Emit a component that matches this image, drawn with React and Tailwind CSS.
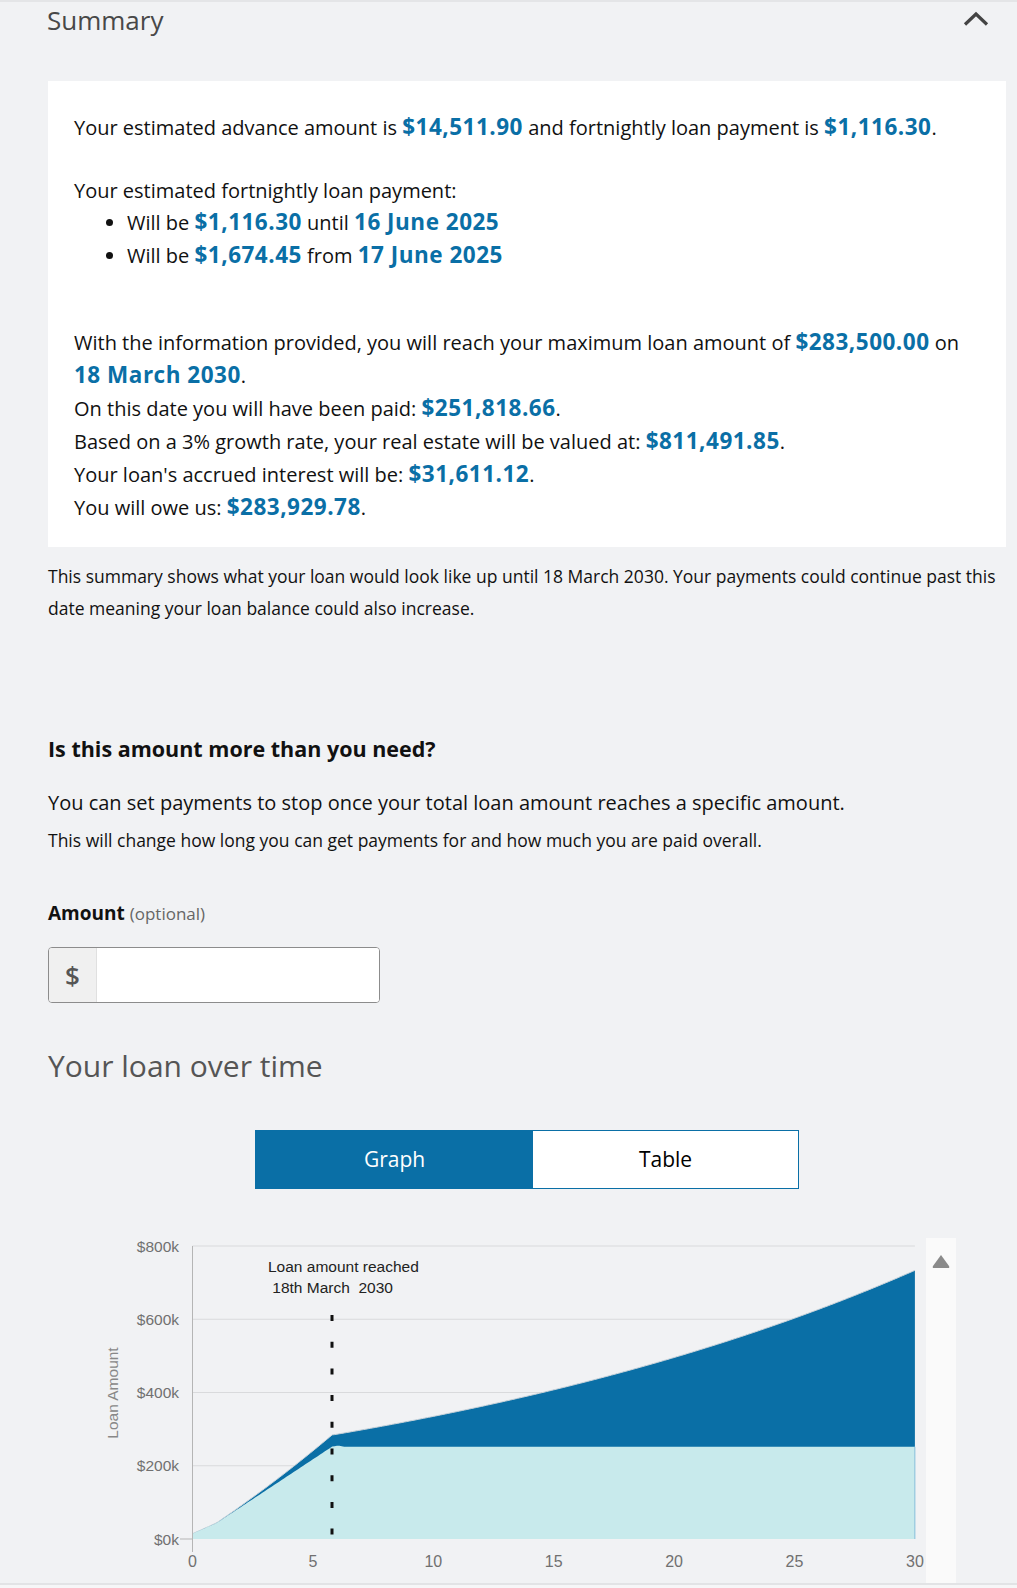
import React from "react";

const FONT = { fontFamily: '"Segoe UI", "Open Sans", "Noto Sans", sans-serif' };

function B({ children }) {
  return (
    <span className="font-bold text-[#0a6fa6] text-[22.5px] leading-[1] tracking-[0.5px] whitespace-nowrap">
      {children}
    </span>
  );
}

const X0 = 192.5;
const XS = 24.08;
const Y0 = 314;
const YS = 293 / 800;
const px = (t) => X0 + t * XS;
const py = (v) => Y0 - v * YS;

function light(t) {
  if (t <= 1) return 14.5 + 29 * t;
  if (t <= 5.8) return 43.5 + 43.5 * (t - 1);
  if (t <= 6.3) return 251.8 + 3 * Math.sin(((t - 5.8) / 0.5) * Math.PI);
  return 251.8;
}
function dark(t) {
  if (t <= 5.8) return light(t) + 32 * Math.pow(t / 5.8, 2.2);
  return 283.9 * Math.pow(1.04, t - 5.8);
}

function buildPaths() {
  const ts = [];
  for (let i = 0; i <= 300; i++) ts.push(i / 10);
  ts.push(5.8);
  ts.sort((a, b) => a - b);
  const darkTop = ts.map((t) => `${px(t).toFixed(2)},${py(dark(t)).toFixed(2)}`);
  const lightTop = ts.map((t) => `${px(t).toFixed(2)},${py(light(t)).toFixed(2)}`);
  const darkArea = `M${px(0)},${Y0} L${darkTop.join(" L")} L${px(30)},${Y0} Z`;
  const lightArea = `M${px(0)},${Y0} L${lightTop.join(" L")} L${px(30)},${Y0} Z`;
  const darkLine = `M${darkTop.join(" L")}`;
  return { darkArea, lightArea, darkLine };
}

function Chart() {
  const { darkArea, lightArea, darkLine } = buildPaths();
  const grid = [200, 400, 600, 800];
  const yLabels = [0, 200, 400, 600, 800];
  const xLabels = [0, 5, 10, 15, 20, 25, 30];
  return (
    <svg width="1017" height="358" viewBox="0 0 1017 358" className="block" style={{ fontFamily: '"Liberation Sans", Arial, sans-serif' }}>
      {grid.map((g) => (
        <line key={g} x1={X0} x2={px(30)} y1={py(g)} y2={py(g)} stroke="#d9dadc" strokeWidth="1" />
      ))}
      <path d={darkArea} fill="#0a6fa6" />
      <path d={darkLine} fill="none" stroke="#c9d3da" strokeWidth="1" />
      <path d={lightArea} fill="#c8eaec" />
      <line x1={px(30)} x2={px(30)} y1={py(251.8)} y2={Y0} stroke="#8fc4df" strokeWidth="1" />
      <line x1={X0} x2={X0} y1={21} y2={327} stroke="#b5b5b5" strokeWidth="1" />
      <line x1={180} x2={X0} y1={Y0} y2={Y0} stroke="#b5b5b5" strokeWidth="1" />
      {yLabels.map((v) => (
        <text key={v} x={179} y={py(v)} textAnchor="end" dominantBaseline="central" fontSize="15.5" fill="#707070">
          {`$${v}k`}
        </text>
      ))}
      {xLabels.map((t) => (
        <text key={t} x={px(t)} y={336} textAnchor="middle" dominantBaseline="central" fontSize="16" fill="#707070">
          {t}
        </text>
      ))}
      <text x={0} y={0} transform="translate(112,168) rotate(-90)" textAnchor="middle" dominantBaseline="central" fontSize="15.5" fill="#888">
        Loan Amount
      </text>
      <text x={268} y={41} dominantBaseline="central" fontSize="15.5" fill="#222">
        Loan amount reached
      </text>
      <text x={268} y={62} dominantBaseline="central" fontSize="15.5" fill="#222" xmlSpace="preserve">
        {" 18th March  2030"}
      </text>
      <line x1={332} x2={332} y1={90} y2={311} stroke="#111" strokeWidth="3" strokeDasharray="6 20.7" />
      <rect x={926} y={13} width={30} height={345} fill="#fafafa" />
      <path d="M941 30 L949 41 Q950 43 948 43 L934 43 Q932 43 933 41 Z" fill="#8a8a8a" />
    </svg>
  );
}

export default function App() {
  return (
    <div className="w-full min-h-[1588px] bg-[#f1f2f4] text-[#111]" style={FONT}>
      <div className="border-t-2 border-[#e4e5e7]" />
      <div className="flex items-center justify-between pl-[47px] pr-[28px] h-[36px]">
        <h2 className="text-[26px] leading-[36px] text-[#484848]">Summary</h2>
        <svg width="26" height="16" viewBox="0 0 26 16" className="mb-[2px]">
          <path d="M2 13.5 L13 3 L24 13.5" fill="none" stroke="#444" strokeWidth="3.2" />
        </svg>
      </div>

      <div className="mt-[43px] ml-[48px] mr-[11px] bg-white pl-[26px] pr-[20px] pt-[30px] pb-[23px] text-[20px] leading-[33px]">
        <p>
          Your estimated advance amount is <B>$14,511.90</B> and fortnightly loan payment is <B>$1,116.30</B>.
        </p>
        <p className="mt-[30px]">Your estimated fortnightly loan payment:</p>
        <ul className="list-disc pl-[53px] leading-[32.5px]">
          <li>
            Will be <B>$1,116.30</B> until <B>16 June 2025</B>
          </li>
          <li>
            Will be <B>$1,674.45</B> from <B>17 June 2025</B>
          </li>
        </ul>
        <p className="mt-[54px]">
          With the information provided, you will reach your maximum loan amount of <B>$283,500.00</B> on <B>18 March 2030</B>.
        </p>
        <p>
          On this date you will have been paid: <B>$251,818.66</B>.
        </p>
        <p>
          Based on a 3% growth rate, your real estate will be valued at: <B>$811,491.85</B>.
        </p>
        <p>
          Your loan's accrued interest will be: <B>$31,611.12</B>.
        </p>
        <p>
          You will owe us: <B>$283,929.78</B>.
        </p>
      </div>

      <p className="mt-[13px] ml-[48px] mr-[10px] text-[17.5px] leading-[32px]">
        This summary shows what your loan would look like up until 18 March 2030. Your payments could continue past this date meaning your loan balance could also increase.
      </p>

      <div className="ml-[48px] mr-[10px]">
        <h3 className="mt-[110px] text-[21.5px] leading-[30px] font-bold">Is this amount more than you need?</h3>
        <p className="mt-[24px] text-[20px] leading-[30px]">You can set payments to stop once your total loan amount reaches a specific amount.</p>
        <p className="mt-[7px] text-[17.5px] leading-[30px]">This will change how long you can get payments for and how much you are paid overall.</p>

        <p className="mt-[43px] text-[19px] leading-[30px]">
          <span className="font-bold">Amount</span>{" "}
          <span className="text-[17px] text-[#666]">(optional)</span>
        </p>

        <div className="mt-[18px] flex w-[332px] h-[56px] rounded-[4px] border border-[#8c8c8c] bg-white overflow-hidden">
          <div className="w-[48px] flex items-center justify-center bg-[#f0f0f0] border-r border-[#e0e0e0] text-[26px] font-semibold text-[#555]">$</div>
          <input className="flex-1 outline-none px-3 text-[20px] bg-white" aria-label="Amount" />
        </div>

        <h2 className="mt-[43px] text-[30px] leading-[40px] text-[#555]">Your loan over time</h2>

        <div className="mt-[44px] ml-[207px] flex w-[544px] h-[59px] border border-[#0a6fa6]">
          <div className="w-[277px] flex items-center justify-center bg-[#0a6fa6] text-white text-[21px]">Graph</div>
          <div className="flex-1 flex items-center justify-center bg-white text-black text-[21px]">Table</div>
        </div>
      </div>

      <div className="mt-[36px]">
        <Chart />
      </div>
      <div className="border-t-2 border-[#e2e3e5] bg-[#f6f6f7] h-[10px]" />
    </div>
  );
}
